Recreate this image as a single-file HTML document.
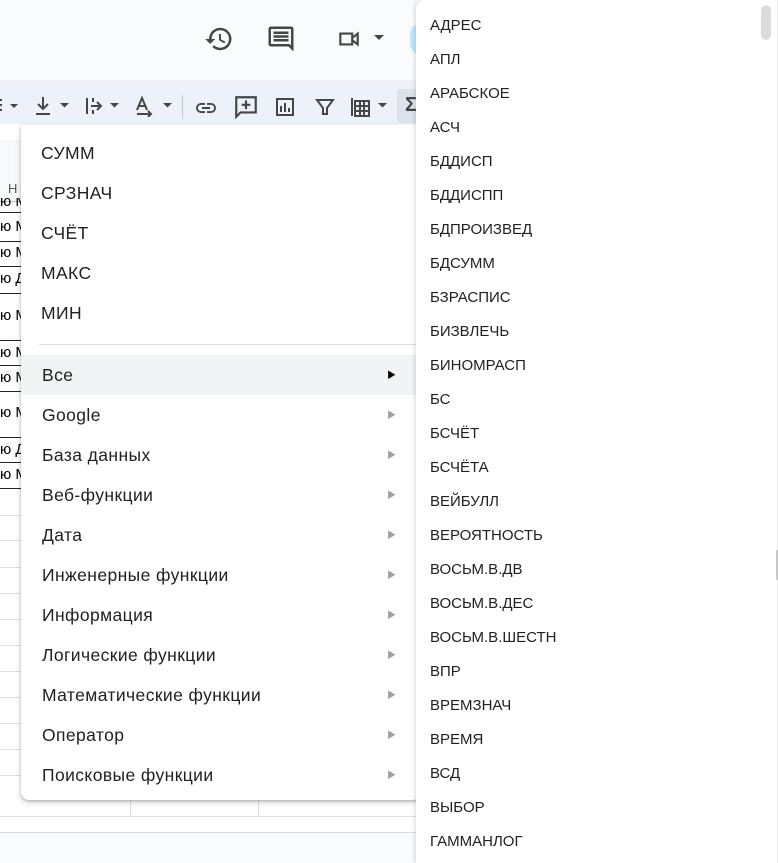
<!DOCTYPE html>
<html><head><meta charset="utf-8">
<style>
*{margin:0;padding:0;box-sizing:border-box}
body{width:778px;height:863px;overflow:hidden;position:relative;background:#fff;font-family:"Liberation Sans","Noto Sans CJK SC",sans-serif;color:#202124}
.top{position:absolute;left:0;top:0;width:778px;height:80px;background:#f9fbfd}
.tb{position:absolute;left:0;top:80px;width:778px;height:44px;background:#edf2fa}
.colh{position:absolute;left:0;top:178px;width:30px;height:24px;background:#f8f9fa;border-bottom:1px solid #c0c0c0;font-size:13px;color:#555;padding:3px 0 0 8px}
.hl{position:absolute;left:0;width:22px;height:1px;background:#222}
.gl{position:absolute;left:0;width:416px;height:1px;background:#e0e0e0}
.cell{position:absolute;left:0;font-size:15px;color:#000;width:22px;overflow:hidden;white-space:nowrap}
.menu{position:absolute;left:21px;top:125px;width:400px;height:675px;background:#fff;border-radius:0 0 8px 8px;box-shadow:0 2px 6px rgba(60,64,67,.3),0 1px 2px rgba(60,64,67,.2)}
.mi{position:absolute;left:0;width:395px;height:40px;font-size:17.5px;letter-spacing:0.4px;line-height:40px;padding-left:21px;white-space:nowrap}
.mi .a{position:absolute;left:366px;top:0;font-size:9px;color:#9aa0a6;letter-spacing:0}
.sub{position:absolute;left:416px;top:0;width:362px;height:863px;background:#fff;box-shadow:-1px 0 4px rgba(60,64,67,.2);border-radius:8px 0 0 0}
.si{position:absolute;left:14px;font-size:15px;color:#202124;margin-top:1px}
svg{position:absolute}
</style></head><body>
<div class="top"></div>
<div class="tb"></div>
<svg style="left:204px;top:24px" width="30" height="30" viewBox="0 0 24 24"><path fill="#444746" d="M13 3a9 9 0 0 0-9 9H1l3.9 3.9L9 12H6a7 7 0 1 1 2.05 4.95l-1.420 1.42A9 9 0 1 0 13 3zm-1 5v5l4.25 2.52.77-1.28-3.52-2.090V8z"/></svg>
<svg style="left:266px;top:24px" width="30" height="30" viewBox="0 0 24 24"><path fill="#444746" d="M21.99 4c0-1.1-.89-2-1.990-2H4c-1.1 0-2 .9-2 2v12c0 1.1.9 2 2 2h14l4 4zM20 4v13.17L18.83 16H4V4zM6 12h12v2H6zm0-3h12v2H6zm0-3h12v2H6z"/></svg>
<svg style="left:334px;top:26px" width="30" height="26" viewBox="0 0 24 24"><path fill="none" stroke="#444746" stroke-width="2" d="M4 7h11v10H4z M15 11l5-4v10l-5-4"/></svg>
<svg style="left:374px;top:35px" width="10" height="6"><path d="M0 0h10L5 5z" fill="#444746"/></svg>
<svg style="left:0;top:96px" width="20" height="20"><path d="M0 4h2M0 9h2M0 14h2" stroke="#444746" stroke-width="2"/><path d="M10 8h8l-4 4z" fill="#444746"/></svg>
<svg style="left:33px;top:95px" width="40" height="22"><path d="M10 2v12M5 9l5 5 5-5M3 19h14" stroke="#444746" stroke-width="2" fill="none"/><path d="M27 8h9l-4.5 4.5z" fill="#444746"/></svg>
<svg style="left:83px;top:95px" width="40" height="22"><path d="M4 3v16M8 11h10M14 7l4 4-4 4M10 3v4M10 15v4" stroke="#444746" stroke-width="2" fill="none"/><path d="M27 8h9l-4.5 4.5z" fill="#444746"/></svg>
<svg style="left:134px;top:95px" width="40" height="22"><path d="M3 15L8 3l5 12M5 11h6M3 19h14M14 16l3 3-3 3" stroke="#444746" stroke-width="2" fill="none"/><path d="M29 8h9l-4.5 4.5z" fill="#444746"/></svg>
<div style="position:absolute;left:182px;top:95px;width:1px;height:24px;background:#c4c7c5"></div>
<svg style="left:194px;top:96px" width="24" height="24" viewBox="0 0 24 24"><path fill="#444746" d="M3.9 12c0-1.71 1.39-3.1 3.1-3.1h4V7H7a5 5 0 0 0 0 10h4v-1.9H7c-1.71 0-3.1-1.39-3.1-3.1zM8 13h8v-2H8zm9-6h-4v1.9h4c1.71 0 3.1 1.39 3.1 3.1s-1.39 3.1-3.1 3.1h-4V17h4a5 5 0 0 0 0-10z"/></svg>
<svg style="left:233px;top:94px" width="26" height="26" viewBox="0 0 24 24"><path fill="none" stroke="#444746" stroke-width="2" d="M3 3h18v14H7l-4 4zM12 6v8M8 10h8"/></svg>
<svg style="left:275px;top:97px" width="20" height="20" viewBox="0 0 20 20"><path fill="none" stroke="#444746" stroke-width="2" d="M2 2h16v16H2zM6 9v6M10 6v9M14 11v4"/></svg>
<svg style="left:315px;top:97px" width="20" height="20" viewBox="0 0 20 20"><path fill="none" stroke="#444746" stroke-width="2" d="M2 3h16l-6 8v6h-4v-6z"/></svg>
<svg style="left:350px;top:95px" width="42" height="24"><path fill="none" stroke="#444746" stroke-width="2" d="M2 3v18M5 6h14v15H5zM5 11h14M5 16h14M10 6v15M14 6v15"/><path d="M28 8h9l-4.5 4.5z" fill="#444746"/></svg>
<div style="position:absolute;left:397px;top:89px;width:24px;height:34px;background:#dde3ea;border-radius:4px 0 0 4px"></div>
<div style="position:absolute;left:405px;top:94px;font-size:20px;font-weight:bold;color:#444746">Σ</div>
<div style="position:absolute;left:410px;top:24px;width:20px;height:30px;border-radius:15px;background:#c2e7ff"></div>
<div style="position:absolute;left:0;top:140px;width:21px;height:38px;background:#f8f9fa"></div>
<div class="colh">Н</div>
<div class="cell" style="top:198px;height:10px;line-height:8px">ю М</div>
<div class="hl" style="top:212px"></div>
<div class="cell" style="top:218px">ю М</div>
<div class="hl" style="top:241px"></div>
<div class="cell" style="top:244px">ю М</div>
<div class="hl" style="top:266px"></div>
<div class="cell" style="top:270px">ю Д</div>
<div class="hl" style="top:293px"></div>
<div class="cell" style="top:307px">ю М</div>
<div class="hl" style="top:340px"></div>
<div class="cell" style="top:344px">ю М</div>
<div class="hl" style="top:365px"></div>
<div class="cell" style="top:369px">ю М</div>
<div class="hl" style="top:391px"></div>
<div class="cell" style="top:404px">ю М</div>
<div class="hl" style="top:437px"></div>
<div class="cell" style="top:441px">ю Д</div>
<div class="hl" style="top:462px"></div>
<div class="cell" style="top:466px">ю М</div>
<div class="hl" style="top:488px"></div>
<div class="gl" style="top:515px"></div><div class="gl" style="top:540px"></div><div class="gl" style="top:567px"></div><div class="gl" style="top:593px"></div><div class="gl" style="top:619px"></div><div class="gl" style="top:645px"></div><div class="gl" style="top:671px"></div><div class="gl" style="top:697px"></div><div class="gl" style="top:723px"></div><div class="gl" style="top:749px"></div><div class="gl" style="top:775px"></div><div class="gl" style="top:816px"></div>
<div style="position:absolute;left:130px;top:800px;width:1px;height:16px;background:#e0e0e0"></div>
<div style="position:absolute;left:258px;top:800px;width:1px;height:16px;background:#e0e0e0"></div>
<div style="position:absolute;left:0;top:832px;width:416px;height:1px;background:#dadce0"></div>
<div style="position:absolute;left:0;top:833px;width:416px;height:30px;background:#f9fbfd"></div>
<div class="menu">
<div class="mi" style="top:8px;padding-left:20px">СУММ</div>
<div class="mi" style="top:48px;padding-left:20px">СРЗНАЧ</div>
<div class="mi" style="top:88px;padding-left:20px">СЧЁТ</div>
<div class="mi" style="top:128px;padding-left:20px">МАКС</div>
<div class="mi" style="top:168px;padding-left:20px">МИН</div>
<div style="position:absolute;left:18px;top:219px;width:377px;height:1px;background:#dadce0"></div>
<div class="mi" style="top:230px;background:#f1f3f4">Все<span class="a" style="color:#000">▶</span></div>
<div class="mi" style="top:270px">Google<span class="a">▶</span></div>
<div class="mi" style="top:310px">База данных<span class="a">▶</span></div>
<div class="mi" style="top:350px">Веб-функции<span class="a">▶</span></div>
<div class="mi" style="top:390px">Дата<span class="a">▶</span></div>
<div class="mi" style="top:430px">Инженерные функции<span class="a">▶</span></div>
<div class="mi" style="top:470px">Информация<span class="a">▶</span></div>
<div class="mi" style="top:510px">Логические функции<span class="a">▶</span></div>
<div class="mi" style="top:550px">Математические функции<span class="a">▶</span></div>
<div class="mi" style="top:590px">Оператор<span class="a">▶</span></div>
<div class="mi" style="top:630px">Поисковые функции<span class="a">▶</span></div>
</div>
<div class="sub">
<div style="position:absolute;left:345px;top:5px;width:10px;height:35px;border-radius:5px;background:#dadce0"></div>
<div style="position:absolute;left:361px;top:0;width:1px;height:863px;background:#e8e8e8"></div>
<div style="position:absolute;left:360px;top:550px;width:2px;height:30px;background:#c8c8c8"></div>
<div class="si" style="top:16px">АДРЕС</div>
<div class="si" style="top:50px">АПЛ</div>
<div class="si" style="top:84px">АРАБСКОЕ</div>
<div class="si" style="top:118px">АСЧ</div>
<div class="si" style="top:152px">БДДИСП</div>
<div class="si" style="top:186px">БДДИСПП</div>
<div class="si" style="top:220px">БДПРОИЗВЕД</div>
<div class="si" style="top:254px">БДСУММ</div>
<div class="si" style="top:288px">БЗРАСПИС</div>
<div class="si" style="top:322px">БИЗВЛЕЧЬ</div>
<div class="si" style="top:356px">БИНОМРАСП</div>
<div class="si" style="top:390px">БС</div>
<div class="si" style="top:424px">БСЧЁТ</div>
<div class="si" style="top:458px">БСЧЁТА</div>
<div class="si" style="top:492px">ВЕЙБУЛЛ</div>
<div class="si" style="top:526px">ВЕРОЯТНОСТЬ</div>
<div class="si" style="top:560px">ВОСЬМ.В.ДВ</div>
<div class="si" style="top:594px">ВОСЬМ.В.ДЕС</div>
<div class="si" style="top:628px">ВОСЬМ.В.ШЕСТН</div>
<div class="si" style="top:662px">ВПР</div>
<div class="si" style="top:696px">ВРЕМЗНАЧ</div>
<div class="si" style="top:730px">ВРЕМЯ</div>
<div class="si" style="top:764px">ВСД</div>
<div class="si" style="top:798px">ВЫБОР</div>
<div class="si" style="top:832px">ГАММАНЛОГ</div>
</div>
</body></html>
